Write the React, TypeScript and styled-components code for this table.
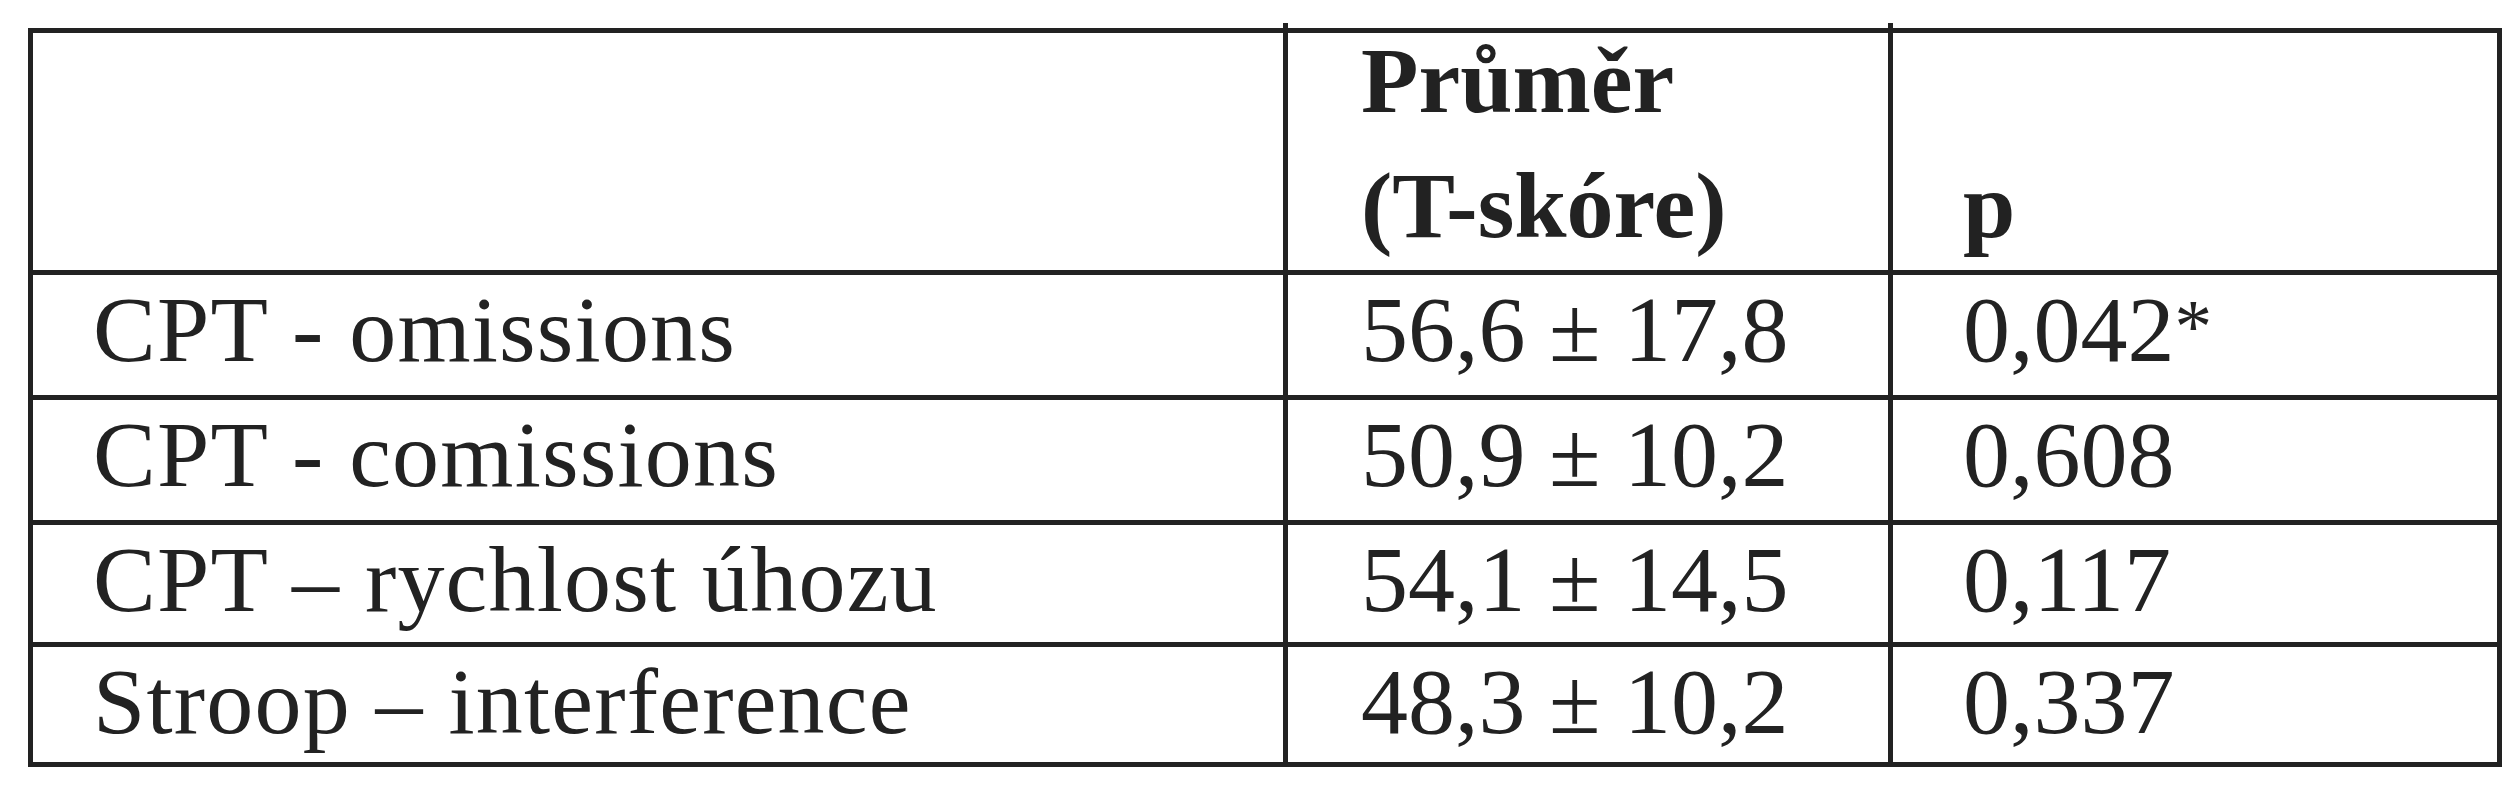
import styled, { createGlobalStyle } from "styled-components";

const GlobalStyle = createGlobalStyle`
  html, body {
    margin: 0;
    padding: 0;
    background: #ffffff;
  }
  body {
    font-family: "Liberation Serif", "Times New Roman", serif;
    color: #222222;
  }
`;

const Page = styled.div`
  padding: 28px 0 0 28px;
`;

const Table = styled.div`
  display: grid;
  grid-template-columns: 1255px 605px 609px;
  grid-template-rows: 242px 125px 125px 122px 120px;
  width: max-content;
  border-top: 5px solid #222;
  border-left: 5px solid #222;
`;

const BaseCell = styled.div<{
  $pad: number;
  $spacing?: number;
  $tickTop?: boolean;
  $tickBottom?: boolean;
}>`
  position: relative;
  box-sizing: border-box;
  border-right: 5px solid #222;
  border-bottom: 5px solid #222;
  padding-left: ${({ $pad }) => $pad}px;
  font-size: 94px;
  letter-spacing: ${({ $spacing }) => $spacing ?? 0}px;
  white-space: nowrap;

  ${({ $tickTop }) =>
    $tickTop &&
    `
    &::before {
      content: "";
      position: absolute;
      top: -10px;
      right: -5px;
      width: 5px;
      height: 10px;
      background: #222;
    }
  `}

  ${({ $tickBottom }) =>
    $tickBottom &&
    `
    &::after {
      content: "";
      position: absolute;
      bottom: -10px;
      right: -5px;
      width: 5px;
      height: 10px;
      background: #222;
    }
  `}
`;

const HeadCell = styled(BaseCell)`
  display: flex;
  flex-direction: column;
  justify-content: flex-end;
  font-weight: 700;
  line-height: 125px;
  padding-bottom: 2px;
`;

const Cell = styled(BaseCell)`
  font-weight: 400;
  line-height: normal;
  padding-top: 0;
`;

const Star = styled.span`
  font-size: 0.8em;
  vertical-align: 0.12em;
`;

const PAD = [60, 73, 70];
const SPACING = [1.2, 0, 0];

const rows = [
  ["CPT - omissions", "56,6 ± 17,8", "0,042*"],
  ["CPT - comissions", "50,9 ± 10,2", "0,608"],
  ["CPT – rychlost úhozu", "54,1 ± 14,5", "0,117"],
  ["Stroop – interference", "48,3 ± 10,2", "0,337"],
];

export default function App() {
  return (
    <>
      <GlobalStyle />
      <Page>
        <Table>
          <HeadCell $pad={PAD[0]} $tickTop />
          <HeadCell $pad={PAD[1]} $tickTop>
            <span>Průměr</span>
            <span>(T-skóre)</span>
          </HeadCell>
          <HeadCell $pad={PAD[2]}>
            <span>p</span>
          </HeadCell>
          {rows.map((row, r) =>
            row.map((text, c) => (
              <Cell
                key={`${r}-${c}`}
                $pad={PAD[c]}
                $spacing={SPACING[c]}
                $tickBottom={r === rows.length - 1 && c < 2}
              >
                {text.endsWith("*") ? (
                  <>
                    {text.slice(0, -1)}
                    <Star>*</Star>
                  </>
                ) : (
                  text
                )}
              </Cell>
            ))
          )}
        </Table>
      </Page>
    </>
  );
}
